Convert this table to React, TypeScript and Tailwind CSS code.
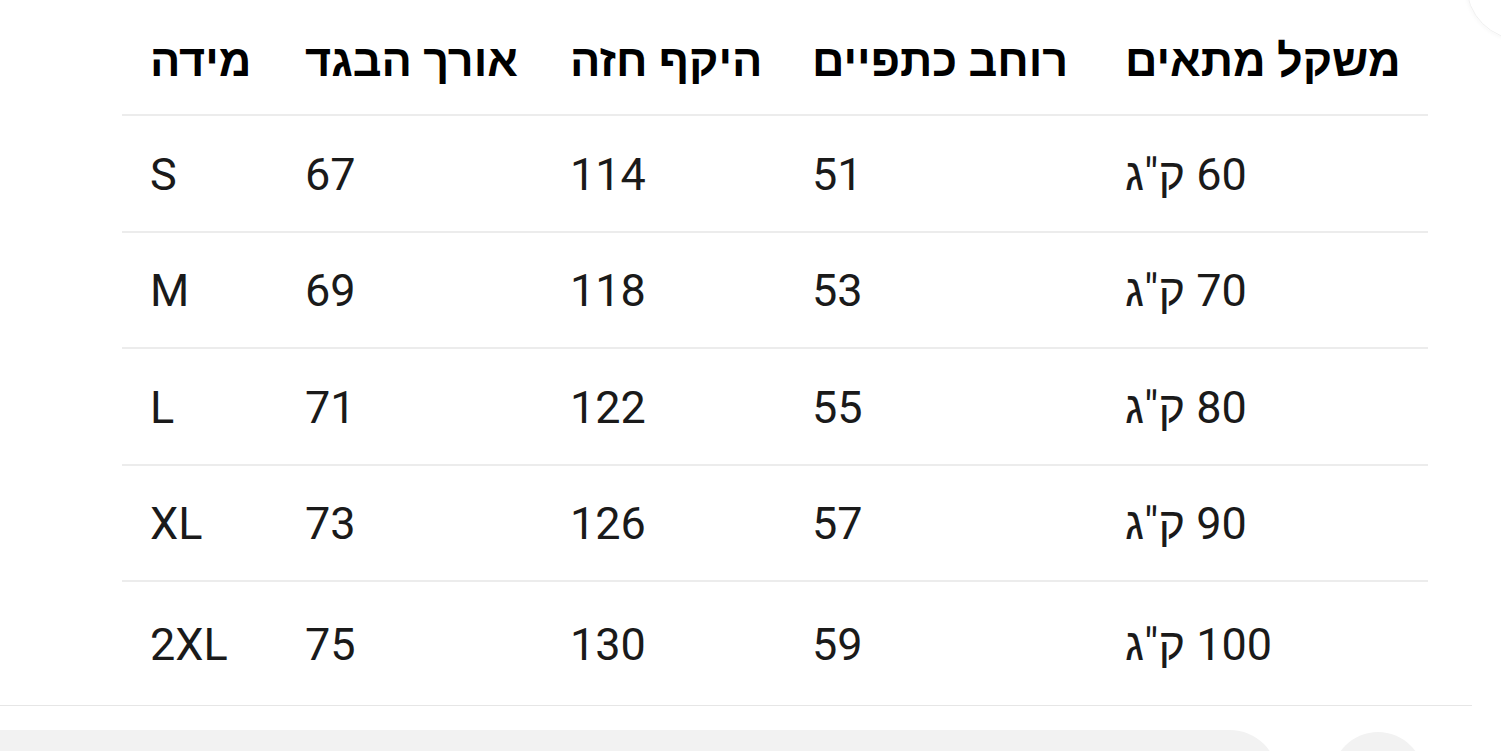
import React from "react";

const headers = ["מידה", "אורך הבגד", "היקף חזה", "רוחב כתפיים", "משקל מתאים"];
const rows = [
  ["S", "67", "114", "51", "60 ק\"ג"],
  ["M", "69", "118", "53", "70 ק\"ג"],
  ["L", "71", "122", "55", "80 ק\"ג"],
  ["XL", "73", "126", "57", "90 ק\"ג"],
  ["2XL", "75", "130", "59", "100 ק\"ג"],
];

const cols = "grid grid-cols-[155px_265px_242px_313px_331px]";

export default function App() {
  return (
    <div
      className="relative w-[1501px] h-[751px] bg-white overflow-hidden text-[#1a1a1a]"
      style={{ fontFamily: 'Roboto, "Liberation Sans", sans-serif' }}
    >
      <div className="absolute -right-[75px] -top-[70px] w-[110px] h-[110px] rounded-full border border-[#f0f0f0] shadow-[0_0_5px_rgba(0,0,0,0.05)]" />
      <div className="pl-[122px]">
        <div className="w-[1306px]">
          <div className={`${cols} h-[116px] items-center border-b-2 border-[#ececec]`}>
            {headers.map((h) => (
              <div key={h} className="pl-7 pt-[6px] text-[45px] font-bold text-black leading-none">
                {h}
              </div>
            ))}
          </div>
          {rows.map((r, i) => (
            <div
              key={r[0]}
              className={`${cols} items-center ${i < rows.length - 1 ? "h-[116.5px] border-b-2 border-[#ececec]" : "h-[122.5px]"}`}
            >
              {r.map((c, j) => (
                <div
                  key={j}
                  dir={j === 4 ? "rtl" : undefined}
                  className="pl-7 pr-0 pt-[2px] text-left text-[45px] leading-none"
                >
                  {c}
                </div>
              ))}
            </div>
          ))}
        </div>
      </div>
      <div className="w-[1472px] h-px bg-[#e6e6e6]" />
      <div className="flex mt-[24px] gap-[54px]">
        <div className="w-[1278px] h-[60px] bg-[#f2f2f2] rounded-tr-[48px]" />
        <div className="w-[92px] h-[92px] mt-[2px] rounded-full bg-[#f2f2f2]" />
      </div>
    </div>
  );
}
